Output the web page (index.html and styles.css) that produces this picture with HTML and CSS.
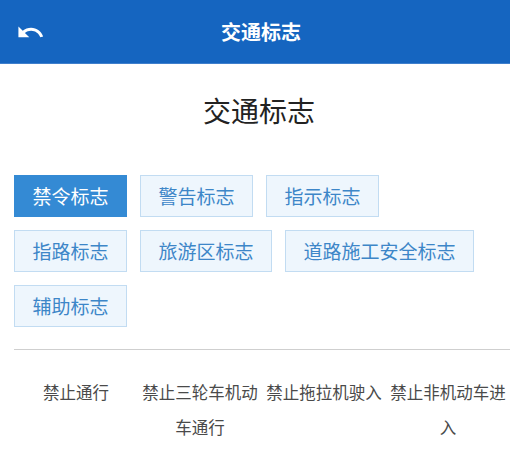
FILE: index.html
```html
<!DOCTYPE html>
<html lang="zh-CN">
<head>
<meta charset="utf-8">
<title>交通标志</title>
<link rel="stylesheet" href="styles.css">
</head>
<body>
<header class="topbar">
  <span class="back">
    <svg viewBox="0 0 24 24" width="29" height="29"><path fill="#fff" d="M12.5 8c-2.65 0-5.05.99-6.9 2.6L2 7v9h9l-3.62-3.62c1.39-1.16 3.16-1.88 5.12-1.88 3.54 0 6.55 2.31 7.6 5.5l2.37-.78C21.08 11.03 17.15 8 12.5 8z"/></svg>
  </span>
  <h1 class="topbar-title">交通标志</h1>
</header>
<main class="page">
  <h2 class="page-title">交通标志</h2>
  <div class="tabs">
    <span class="tab active">禁令标志</span>
    <span class="tab">警告标志</span>
    <span class="tab">指示标志</span>
    <span class="tab">指路标志</span>
    <span class="tab">旅游区标志</span>
    <span class="tab">道路施工安全标志</span>
    <span class="tab">辅助标志</span>
  </div>
  <div class="divider"></div>
  <div class="signs">
    <div class="sign">禁止通行</div>
    <div class="sign">禁止三轮车机动车通行</div>
    <div class="sign">禁止拖拉机驶入</div>
    <div class="sign">禁止非机动车进入</div>
  </div>
</main>
</body>
</html>
```
FILE: styles.css
```css
* { box-sizing: border-box; }
html, body {
  margin: 0;
  padding: 0;
  background: #fff;
  font-family: "Noto Sans CJK SC", "Noto Sans", sans-serif;
  overflow: hidden;
}
.topbar {
  position: relative;
  height: 64px;
  background: #1565c0;
  border-bottom: 1px solid #3f7fcc;
  display: flex;
  align-items: center;
  justify-content: center;
}
.back {
  position: absolute;
  left: 16px;
  top: 18px;
  width: 29px;
  height: 29px;
}
.back svg { display: block; }
.topbar-title {
  margin: 0 0 0 12px;
  color: #fff;
  font-size: 20px;
  font-weight: 700;
  line-height: 1;
}
.page-title {
  margin: 27px 0 0;
  padding-left: 8px;
  text-align: center;
  font-size: 28px;
  font-weight: 400;
  line-height: 38px;
  color: #222;
}
.tabs {
  margin-top: 46px;
  padding: 0 14px;
  display: flex;
  flex-wrap: wrap;
  gap: 13px 13px;
}
.tab {
  height: 42px;
  line-height: 40px;
  padding: 0 17.5px;
  font-size: 19px;
  color: #3d86c8;
  background: #eef6fd;
  border: 1px solid #c2dcf2;
}
.tab.active {
  background: #348ad4;
  border-color: #348ad4;
  color: #fff;
}
.divider {
  margin: 22px 0 0 14px;
  height: 1px;
  background: #cfcfcf;
}
.signs {
  margin: 25px 0 0 14px;
  display: grid;
  grid-template-columns: repeat(4, 124px);
}
.sign {
  text-align: center;
  font-size: 16.5px;
  line-height: 35px;
  color: #4a4a4a;
}
```
